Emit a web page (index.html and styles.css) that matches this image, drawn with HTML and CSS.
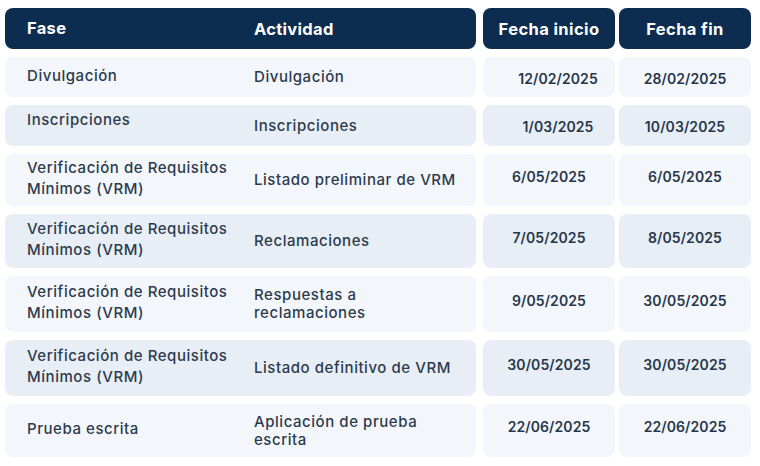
FILE: index.html
```html
<!DOCTYPE html>
<html lang="es">
<head>
<meta charset="utf-8">
<title>Cronograma</title>
<link rel="stylesheet" href="styles.css">
</head>
<body>
<div class="table">
  <div class="row row-head">
    <div class="cell cell-main head">
      <span class="col-fase">Fase</span>
      <span class="col-act">Actividad</span>
    </div>
    <div class="cell cell-date head">Fecha inicio</div>
    <div class="cell cell-date head">Fecha fin</div>
  </div>

  <div class="row row-odd row-1">
    <div class="cell cell-main">
      <span class="col-fase">Divulgación</span>
      <span class="col-act">Divulgación</span>
    </div>
    <div class="cell cell-date date-shift">12/02/2025</div>
    <div class="cell cell-date">28/02/2025</div>
  </div>

  <div class="row row-even row-2">
    <div class="cell cell-main">
      <span class="col-fase">Inscripciones</span>
      <span class="col-act">Inscripciones</span>
    </div>
    <div class="cell cell-date date-shift">1/03/2025</div>
    <div class="cell cell-date">10/03/2025</div>
  </div>

  <div class="row row-odd row-tall row-3">
    <div class="cell cell-main">
      <span class="col-fase">Verificación de Requisitos<br>Mínimos (VRM)</span>
      <span class="col-act">Listado preliminar de VRM</span>
    </div>
    <div class="cell cell-date">6/05/2025</div>
    <div class="cell cell-date">6/05/2025</div>
  </div>

  <div class="row row-even row-tall row-4">
    <div class="cell cell-main">
      <span class="col-fase">Verificación de Requisitos<br>Mínimos (VRM)</span>
      <span class="col-act">Reclamaciones</span>
    </div>
    <div class="cell cell-date">7/05/2025</div>
    <div class="cell cell-date">8/05/2025</div>
  </div>

  <div class="row row-odd row-tall row-5">
    <div class="cell cell-main">
      <span class="col-fase">Verificación de Requisitos<br>Mínimos (VRM)</span>
      <span class="col-act">Respuestas a<br>reclamaciones</span>
    </div>
    <div class="cell cell-date">9/05/2025</div>
    <div class="cell cell-date">30/05/2025</div>
  </div>

  <div class="row row-even row-tall row-6">
    <div class="cell cell-main">
      <span class="col-fase">Verificación de Requisitos<br>Mínimos (VRM)</span>
      <span class="col-act">Listado definitivo de VRM</span>
    </div>
    <div class="cell cell-date">30/05/2025</div>
    <div class="cell cell-date">30/05/2025</div>
  </div>

  <div class="row row-odd row-tall row-7">
    <div class="cell cell-main">
      <span class="col-fase">Prueba escrita</span>
      <span class="col-act">Aplicación de prueba<br>escrita</span>
    </div>
    <div class="cell cell-date">22/06/2025</div>
    <div class="cell cell-date">22/06/2025</div>
  </div>
</div>
</body>
</html>
```
FILE: styles.css
```css
* { box-sizing: border-box; }

html, body {
  margin: 0;
  padding: 0;
  background: #ffffff;
}

body {
  font-family: Inter, "Open Sans", "Liberation Sans", sans-serif;
  color: #2d3b4d;
}

.table {
  display: flex;
  flex-direction: column;
  gap: 8px;
  padding: 8px 0 0 5px;
  width: 760px;
}

.row {
  display: grid;
  grid-template-columns: 474px 132px 132px;
  column-gap: 4px;
}

.cell {
  border-radius: 8px;
  display: flex;
  align-items: center;
}

.cell-main {
  margin-right: 3px;
  display: grid;
  grid-template-columns: 227px 1fr;
  align-items: center;
  padding-left: 22px;
}

.cell-date {
  justify-content: center;
  font-size: 14px;
  font-weight: 600;
  color: #27364a;
  letter-spacing: 0.1px;
  padding-top: 2px;
}

.row-tall .cell-date {
  padding-top: 0;
  padding-bottom: 8px;
}

.date-shift {
  padding-left: 18px;
}

.col-fase {
  font-size: 15px;
  font-weight: 500;
  line-height: 21px;
  letter-spacing: 0.55px;
  margin-top: -4px;
}

.col-act {
  font-size: 15px;
  font-weight: 500;
  line-height: 18px;
  letter-spacing: 0.55px;
}

.row-head {
  height: 41px;
}

.head {
  background: #0c2d50;
  color: #ffffff;
  font-weight: 700;
}

.head .col-fase,
.head .col-act {
  font-size: 16.5px;
  font-weight: 700;
  letter-spacing: 0.3px;
  margin-top: 0;
}

.cell-date.head {
  font-size: 16.5px;
  font-weight: 700;
  letter-spacing: 0.4px;
  padding-top: 0;
  color: #ffffff;
}

.row-odd .cell { background: #f3f7fb; }
.row-even .cell { background: #e7eef6; }

.row-1 { height: 40px; }
.row-2 { height: 41px; }
.row-3 { height: 52px; }
.row-4 { height: 54px; }
.row-5 { height: 56px; }
.row-6 { height: 56px; }
.row-7 { height: 53px; }

.row-2 .col-fase { margin-top: -12px; }
```
